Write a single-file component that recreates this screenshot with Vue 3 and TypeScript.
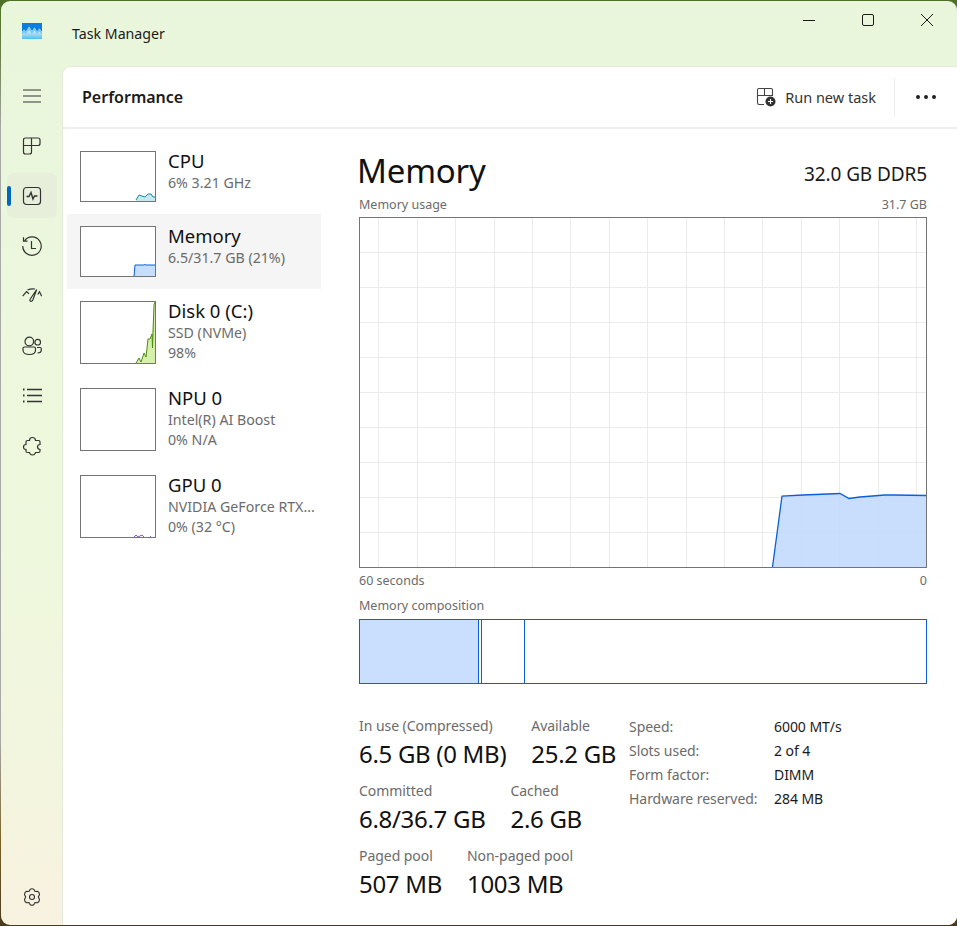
<template>
  <div class="window">
    <div class="titlebar">
      <svg class="app-logo" width="20" height="16" viewBox="0 0 20 16">
        <defs>
          <linearGradient id="logoBg" x1="0" y1="0" x2="0" y2="1">
            <stop offset="0.4" stop-color="#e4f5fd" />
            <stop offset="1" stop-color="#4fc0f0" />
          </linearGradient>
        </defs>
        <rect width="20" height="16" fill="url(#logoBg)" />
        <path d="M0 0H20V9L17.5 5.500 15 8.500 12.500 4.500 10 8 7 3.500 4 8.500 2 6.500 0 9Z" fill="#0a7ee0" />
        <path d="M0 9L2 6.500 4 8.500 7 3.500 10 8 12.500 4.500 15 8.500 17.500 5.500 20 9V11.500L17.500 8.500 15 11 12.500 7.500 10 11 7 7 4 11 2 9.500 0 11.500Z" fill="#7cc8f4" />
      </svg>
      <span class="app-name">Task Manager</span>
      <div class="win-buttons">
        <svg width="14" height="14" viewBox="0 0 14 14"><path d="M1 7.500H13" stroke="#1a1a1a" stroke-width="1" /></svg>
        <svg width="14" height="14" viewBox="0 0 14 14"><rect x="1.500" y="1.500" width="11" height="11" rx="1.500" fill="none" stroke="#1a1a1a" /></svg>
        <svg width="14" height="14" viewBox="0 0 14 14"><path d="M1 1L13 13M13 1L1 13" stroke="#1a1a1a" stroke-width="1" /></svg>
      </div>
    </div>

    <div class="body">
      <nav class="nav">
        <button class="nav-item">
          <svg width="20" height="20" viewBox="0 0 20 20" fill="none" stroke="#333" stroke-width="1.100"><path d="M1 4H19M1 10H19M1 16H19" /></svg>
        </button>
        <button class="nav-item">
          <svg width="20" height="20" viewBox="0 0 20 20" fill="none" stroke="#333" stroke-width="1.200"><path d="M9.500 2H3.500Q1.500 2 1.500 4V9.500H9.500ZM9.500 2H16Q18 2 18 4V7.500Q18 9.500 16 9.500H9.500M1.500 9.500V16Q1.500 18 3.500 18H7.500Q9.500 18 9.500 16V9.500" /></svg>
        </button>
        <button class="nav-item active">
          <svg width="20" height="20" viewBox="0 0 20 20" fill="none" stroke="#333" stroke-width="1.200"><rect x="1.500" y="1.500" width="17" height="17" rx="3" /><path d="M4.500 10.500H7L9 6.500 11 13 12.500 10H15.500" stroke-width="1.400" /></svg>
        </button>
        <button class="nav-item">
          <svg width="20" height="20" viewBox="0 0 20 20" fill="none" stroke="#333" stroke-width="1.200"><path d="M2.700 4.500A9.200 9.200 0 1 1 .8 10M1.500 1.200V5.200H5.500M9.500 5V12.500H14" /></svg>
        </button>
        <button class="nav-item">
          <svg width="20" height="20" viewBox="0 0 20 20" fill="none" stroke="#333" stroke-width="1.200"><path d="M.7 10.200L4.500 5.500 7 7.800M5.500 4Q9 2.300 13 3M14.700 3.500L11 13.500Q10 15.800 8.500 15.300 7.500 14.800 8.300 13ZM15.800 8.500L17.500 5.800 19.700 10.200" /></svg>
        </button>
        <button class="nav-item">
          <svg width="20" height="20" viewBox="0 0 20 20" fill="none" stroke="#333" stroke-width="1.200"><circle cx="7.300" cy="5.500" r="4.300" /><circle cx="15.700" cy="6.200" r="2.800" /><path d="M2.500 11H12Q13.500 11 13.500 12.500V14Q13.500 18.500 7.500 18.500 1 18.500 1 14V12.500Q1 11 2.500 11ZM15 11.500H18Q19.300 11.500 19.300 13V14Q19.300 17 15.500 17" /></svg>
        </button>
        <button class="nav-item">
          <svg width="20" height="20" viewBox="0 0 20 20" fill="none" stroke="#333" stroke-width="1.300"><path d="M5 3.500H20M5 9.500H20M5 15.500H20" /><path d="M1 3.500H2.500M1 9.500H2.500M1 15.500H2.500" stroke-width="2" /></svg>
        </button>
        <button class="nav-item">
          <svg width="20" height="20" viewBox="0 0 20 20" fill="none" stroke="#333" stroke-width="1.200"><path d="M7.500 4.500Q7.500 1.500 10.500 1.500 13.500 1.500 13.500 4.500H16.500Q18 4.500 18 6V8.500Q15.500 8.500 15.500 11 15.500 13 18 13.500V15Q18 16.500 16.500 16.500H13.500Q13 19 10.500 19 8 19 7.500 16.500H5.500Q4 16.500 4 15V13.500Q1.500 13.500 1.500 11 1.500 8.500 4 8.500V6Q4 4.500 5.500 4.500Z" /></svg>
        </button>
        <button class="nav-item settings">
          <svg width="20" height="20" viewBox="0 0 20 20" fill="none" stroke="#333" stroke-width="1.100"><circle cx="10" cy="10" r="2.500" /><path d="M8 2.500Q10 1 12 2.500L13 4.500 15.500 4.300Q17.500 5.500 17.500 7.500L16.300 10 17.500 12.500Q17.500 14.500 15.500 15.700L13 15.500 12 17.500Q10 19 8 17.500L7 15.500 4.500 15.700Q2.500 14.500 2.500 12.500L3.700 10 2.500 7.500Q2.500 5.500 4.500 4.300L7 4.500Z" /></svg>
        </button>
      </nav>

      <main class="main">
        <header class="header">
          <h1>Performance</h1>
          <div class="actions">
            <svg width="20" height="20" viewBox="0 0 20 20" fill="none" stroke="#444" stroke-width="1.100">
              <path d="M8.500 1.500H3Q1.500 1.500 1.500 3V8.500H8.500ZM8.500 1.500H15Q16.500 1.500 16.500 3V8.500H1.500M1.500 8.500V15.500Q1.500 17.500 3 17.500H8" />
              <circle cx="14.500" cy="14.500" r="5" fill="#333" stroke="none" />
              <path d="M14.500 12V17M12 14.500H17" stroke="#fff" />
            </svg>
            <span class="run-label">Run new task</span>
            <span class="divider"></span>
            <span class="dots"><i></i><i></i><i></i></span>
          </div>
        </header>

        <div class="content">
          <aside class="devices">
            <div v-for="d in devices" :key="d.name" class="device" :class="{ selected: d.name === 'Memory', short: d.lines.length === 1 }">
              <svg class="thumb" width="76" :height="d.lines.length === 1 ? 51 : 63" :viewBox="`0 0 76 ${d.lines.length === 1 ? 51 : 63}`">
                <rect width="76" height="63" fill="#fff" />
                <path v-if="d.fill" :d="d.fill" :fill="d.fillColor" />
                <path v-if="d.line" :d="d.line" :stroke="d.color" stroke-width="1" fill="none" />
                <rect x="0.5" y="0.5" width="75" :height="d.lines.length === 1 ? 50 : 62" fill="none" stroke="#747474" />
              </svg>
              <div class="device-text">
                <div class="device-name">{{ d.name }}</div>
                <div v-for="l in d.lines" :key="l" class="device-sub">{{ l }}</div>
              </div>
            </div>
          </aside>

          <section class="detail">
            <div class="title-row">
              <h2>Memory</h2>
              <span class="spec">32.0 GB DDR5</span>
            </div>
            <div class="caption-row"><span>Memory usage</span><span>31.7 GB</span></div>
            <svg class="usage" width="568" height="351" viewBox="0 0 568 351">
              <path :d="gridPath" stroke="#ebebeb" fill="none" />
              <path d="M413.5 350L423 279 444 278 481 276.500 490 281.500 501 280 526 278 536 278 567 278.500V350Z" fill="#c0d9fc" fill-opacity="0.88" />
              <path d="M413.5 350L423 279 444 278 481 276.500 490 281.500 501 280 526 278 536 278 567 278.500" fill="none" stroke="#0b5fdc" stroke-width="1.300" />
              <rect x="0.5" y="0.5" width="567" height="350" fill="none" stroke="#747474" />
            </svg>
            <div class="caption-row below"><span>60 seconds</span><span>0</span></div>
            <div class="caption-row comp-label"><span>Memory composition</span></div>
            <div class="composition">
              <div class="seg in-use"></div>
              <div class="seg modified"></div>
              <div class="seg standby"></div>
              <div class="seg free"></div>
            </div>

            <div class="stats">
              <div class="stat-groups">
                <div v-for="(row, i) in statRows" :key="i" class="stat-row">
                  <div v-for="s in row" :key="s.label" class="stat">
                    <div class="stat-label">{{ s.label }}</div>
                    <div class="stat-value">{{ s.value }}</div>
                  </div>
                </div>
              </div>
              <dl class="specs">
                <template v-for="s in specs" :key="s[0]">
                  <dt>{{ s[0] }}</dt>
                  <dd>{{ s[1] }}</dd>
                </template>
              </dl>
            </div>
          </section>
        </div>
      </main>
    </div>
  </div>
</template>

<script setup lang="ts">
interface Device {
  name: string
  lines: string[]
  line?: string
  fill?: string
  color?: string
  fillColor?: string
}

const devices: Device[] = [
  {
    name: 'CPU',
    lines: ['6%  3.21 GHz'],
    line: 'M56 49L59 44 62 45 65 46 68 43 71 43 73 46 75 46',
    fill: 'M56 49L59 44 62 45 65 46 68 43 71 43 73 46 75 46V50H56Z',
    color: '#1689a8',
    fillColor: '#c8e8f0'
  },
  {
    name: 'Memory',
    lines: ['6.5/31.7 GB (21%)'],
    line: 'M54 50L55 39H64L65 38.5 66 39H75',
    fill: 'M54 50L55 39H75V50Z',
    color: '#0b5fdc',
    fillColor: '#c6ddfc'
  },
  {
    name: 'Disk 0 (C:)',
    lines: ['SSD (NVMe)', '98%'],
    line: 'M56 62L59 57 61 61 64 52 66 56 68 38 70 38 72 33 72.5 47 74 4 75 1',
    fill: 'M56 62L59 57 61 61 64 52 66 56 68 38 70 38 72 33 74 4 75 1V62Z',
    color: '#4f8a10',
    fillColor: '#d6f0ac'
  },
  { name: 'NPU 0', lines: ['Intel(R) AI Boost', '0%  N/A'] },
  {
    name: 'GPU 0',
    lines: ['NVIDIA GeForce RTX...', '0%  (32 °C)'],
    line: 'M54 62L56 60 58 62 60 61 62 60 64 62M70 61L71 62',
    color: '#8a4fd8'
  }
]

const statRows = [
  [
    { label: 'In use (Compressed)', value: '6.5 GB (0 MB)' },
    { label: 'Available', value: '25.2 GB' }
  ],
  [
    { label: 'Committed', value: '6.8/36.7 GB' },
    { label: 'Cached', value: '2.6 GB' }
  ],
  [
    { label: 'Paged pool', value: '507 MB' },
    { label: 'Non-paged pool', value: '1003 MB' }
  ]
]

const specs = [
  ['Speed:', '6000 MT/s'],
  ['Slots used:', '2 of 4'],
  ['Form factor:', 'DIMM'],
  ['Hardware reserved:', '284 MB']
]

let grid = ''
for (let y = 315; y > 0; y -= 35) grid += `M0 ${y + 0.5}H567`
for (let x = 557; x > 0; x -= 38.4) grid += `M${Math.round(x) + 0.5} 0V350`
const gridPath = grid
</script>

<style>
html {
  height: 100%;
}

html,
body {
  margin: 0;
  background: linear-gradient(180deg, #4e6f28 0%, #6a7f48 6%, #a8a8a8 14%, #a8a8a8 80%, #7a6228 91%, #4a3a1c 100%);
}
</style>

<style scoped>
.window {
  width: 956px;
  height: 924px;
  margin: 1px 0 0 1px;
  display: flex;
  flex-direction: column;
  border-radius: 9px;
  overflow: hidden;
  background: linear-gradient(180deg, #e9f6dc 0%, #eef8dd 60%, #f3f5de 85%, #f8f2e0 100%);
  font-family: "Noto Sans", "Open Sans", sans-serif;
  color: #1a1a1a;
}

.titlebar {
  height: 65px;
  flex: none;
  display: flex;
  align-items: center;
}

.app-logo {
  margin-left: 21px;
  margin-top: -5px;
}

.app-name {
  margin-left: 30px;
  font-size: 14.2px;
}

.win-buttons {
  margin-left: auto;
  margin-right: 23px;
  margin-top: -27px;
  display: flex;
  gap: 45px;
}

.body {
  flex: 1;
  display: flex;
  min-height: 0;
}

.nav {
  width: 61px;
  flex: none;
  display: flex;
  flex-direction: column;
  align-items: center;
  padding: 7px 0 5px 0;
  box-sizing: border-box;
}

.nav-item {
  width: 50px;
  height: 45px;
  margin-bottom: 5px;
  border: 0;
  padding: 0;
  background: none;
  border-radius: 6px;
  position: relative;
  display: flex;
  align-items: center;
  justify-content: center;
}

.nav-item.active {
  background: #e7efdb;
}

.nav-item.active::before {
  content: "";
  position: absolute;
  left: 0;
  top: 13px;
  width: 4px;
  height: 20px;
  border-radius: 2px;
  background: #0067c0;
}

.nav-item.settings {
  margin-top: auto;
  margin-bottom: 1px;
}

.main {
  flex: 1;
  background: #fff;
  border-top-left-radius: 9px;
  border-top: 1px solid #e4ebdc;
  border-left: 1px solid #e4ebdc;
  display: flex;
  flex-direction: column;
  min-width: 0;
}

.header {
  height: 62px;
  flex: none;
  box-sizing: border-box;
  display: flex;
  align-items: center;
  border-bottom: 2px solid #eeeeee;
  padding: 0 21px 0 19px;
}

h1 {
  margin: 0;
  font-size: 16px;
  font-weight: 600;
}

.actions {
  margin-left: auto;
  display: flex;
  align-items: center;
}

.run-label {
  margin-left: 9px;
  font-size: 14.5px;
  color: #333;
}

.divider {
  width: 1px;
  height: 39px;
  margin: 0 21px 0 18px;
  background: #eee;
}

.dots {
  display: flex;
  gap: 4px;
}

.dots i {
  width: 4px;
  height: 4px;
  border-radius: 50%;
  background: #222;
}

.content {
  flex: 1;
  display: flex;
  min-height: 0;
}

.devices {
  width: 254px;
  flex: none;
  margin-left: 4px;
  padding-top: 10px;
  display: flex;
  flex-direction: column;
}

.device {
  height: 87px;
  display: flex;
  align-items: center;
  padding-left: 13px;
  box-sizing: border-box;
}

.device.short {
  height: 75px;
}

.device.selected {
  background: #f5f5f5;
}

.thumb {
  flex: none;
  display: block;
}

.device-text {
  margin-left: 12px;
  align-self: flex-start;
  padding-top: 10px;
  white-space: nowrap;
}

.device-name {
  font-size: 18.5px;
  line-height: 24px;
  color: #111;
}

.device-sub {
  font-size: 14.2px;
  line-height: 20px;
  color: #6b6b6b;
}

.detail {
  width: 568px;
  margin-left: 38px;
  flex: none;
}

.title-row {
  display: flex;
  justify-content: space-between;
  align-items: center;
  height: 54px;
  margin-top: 14px;
}

h2 {
  margin: 0 0 0 -2px;
  font-size: 33px;
  font-weight: 400;
  letter-spacing: -0.2px;
  color: #111;
}

.spec {
  padding-top: 8px;
  font-size: 19px;
  letter-spacing: -0.1px;
}

.caption-row {
  display: flex;
  justify-content: space-between;
  font-size: 12.5px;
  line-height: 16px;
  color: #6b6b6b;
}

.usage {
  display: block;
  margin-top: 4px;
}

.caption-row.below {
  margin-top: 5px;
}

.comp-label {
  margin-top: 9px;
}

.composition {
  margin-top: 5px;
  height: 65px;
  border: 1px solid #0b5fdc;
  display: flex;
  box-sizing: border-box;
}

.seg {
  box-sizing: border-box;
  border-right: 1px solid #0b5fdc;
}

.seg.in-use {
  width: 119px;
  background: #c9dffd;
}

.seg.modified {
  width: 3px;
}

.seg.standby {
  width: 43px;
}

.seg.free {
  flex: 1;
  border-right: 0;
}

.stats {
  display: flex;
  margin-top: 32px;
}

.stat-groups {
  width: 270px;
  flex: none;
}

.stat-row {
  display: flex;
  gap: 25px;
  margin-bottom: 9px;
  white-space: nowrap;
}

.stat-label {
  font-size: 14px;
  line-height: 20px;
  color: #6b6b6b;
  letter-spacing: -0.05px;
}

.stat-value {
  font-size: 24px;
  line-height: 36px;
  color: #111;
  letter-spacing: -0.3px;
}

.specs {
  margin: -2px 0 0;
  display: grid;
  grid-template-columns: 145px auto;
  grid-auto-rows: 24px;
  align-items: center;
  font-size: 14px;
  letter-spacing: -0.05px;
}

.specs dt {
  color: #6b6b6b;
}

.specs dd {
  margin: 0;
  color: #1a1a1a;
}
</style>
